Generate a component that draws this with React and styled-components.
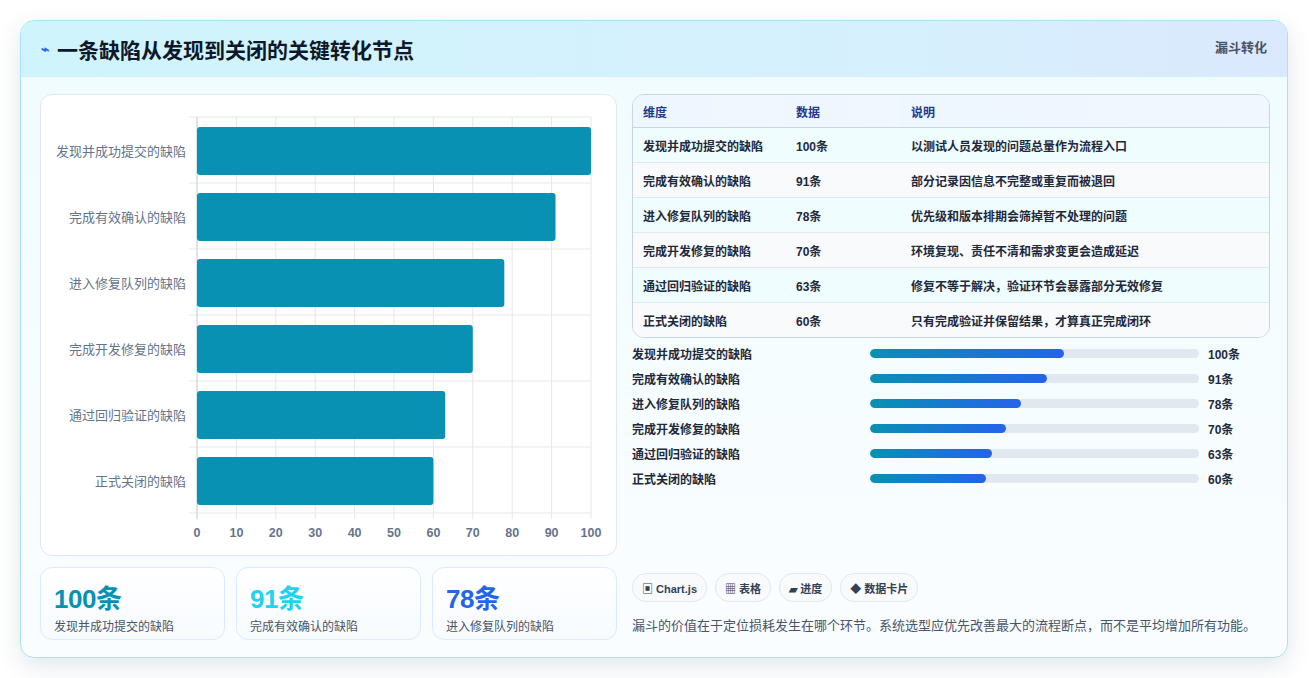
import React from 'react';
import styled, { createGlobalStyle } from 'styled-components';

const Global = createGlobalStyle`
  body { margin: 0; background: #ffffff; font-family: "Liberation Sans", "Noto Sans CJK SC", sans-serif; }
`;

const data = [
  { name: '发现并成功提交的缺陷', v: 100, note: '以测试人员发现的问题总量作为流程入口' },
  { name: '完成有效确认的缺陷', v: 91, note: '部分记录因信息不完整或重复而被退回' },
  { name: '进入修复队列的缺陷', v: 78, note: '优先级和版本排期会筛掉暂不处理的问题' },
  { name: '完成开发修复的缺陷', v: 70, note: '环境复现、责任不清和需求变更会造成延迟' },
  { name: '通过回归验证的缺陷', v: 63, note: '修复不等于解决，验证环节会暴露部分无效修复' },
  { name: '正式关闭的缺陷', v: 60, note: '只有完成验证并保留结果，才算真正完成闭环' },
];

const Page = styled.div`
  padding: 20px;
  height: 678px;
  box-sizing: border-box;
`;
const Card = styled.div`
  width: 1268px;
  height: 638px;
  box-sizing: border-box;
  border: 1px solid #a5e4f0;
  border-radius: 14px;
  background: linear-gradient(180deg, #f0fcff 0%, #fafdff 100%);
  box-shadow: 0 8px 24px rgba(15, 60, 90, 0.12);
  overflow: hidden;
  display: flex;
  flex-direction: column;
`;
const Header = styled.div`
  height: 55px;
  flex: none;
  display: flex;
  align-items: center;
  justify-content: space-between;
  padding: 0 20px;
  background: linear-gradient(90deg, #cff4fc 0%, #d6f0fd 70%, #dbe8fd 100%);
  border-bottom: 1px solid #d5eef6;
`;
const Title = styled.h1`
  margin: 0;
  font-size: 21px;
  font-weight: 700;
  color: #0f172a;
  display: flex;
  align-items: center;
  gap: 8px;
`;
const Bolt = styled.span`
  color: #2563eb;
  font-size: 14px;
`;
const Tag = styled.span`
  align-self: flex-start;
  margin-top: 16px;
  font-size: 13px;
  font-weight: 700;
  color: #475569;
`;
const Body = styled.div`
  flex: 1;
  display: grid;
  grid-template-columns: 577px 638px;
  gap: 15px;
  padding: 17px 19px 18px 19px;
`;
const Col = styled.div`
  display: flex;
  flex-direction: column;
  gap: 11px;
`;
const ChartBox = styled.div`
  height: 462px;
  box-sizing: border-box;
  border: 1px solid #e2e8f0;
  border-radius: 12px;
  background: #fff;
`;
const Stats = styled.div`
  display: grid;
  grid-template-columns: repeat(3, 1fr);
  gap: 11px;
`;
const Stat = styled.div`
  height: 73px;
  box-sizing: border-box;
  border: 1px solid #dbeafe;
  border-radius: 12px;
  background: linear-gradient(180deg, #ffffff, #f7fbff);
  padding: 10px 13px;
`;
const StatNum = styled.div`
  font-size: 26px;
  font-weight: 700;
  color: ${p => p.$c};
  letter-spacing: -0.5px;
`;
const StatLabel = styled.div`
  font-size: 12px;
  color: #475569;
  margin-top: 2px;
`;
const Table = styled.table`
  width: 100%;
  border-collapse: separate;
  border-spacing: 0;
  border: 1px solid #cbd5e1;
  border-radius: 12px;
  overflow: hidden;
  font-size: 12px;
  font-weight: 700;
  color: #1e293b;
`;
const Th = styled.th`
  text-align: left;
  height: 32px;
  padding: 0 10px;
  color: #1e3a8a;
  background: linear-gradient(90deg, #eef6ff, #f1f7ff);
  border-bottom: 1px solid #cbd5e1;
  width: ${p => p.$w || 'auto'};
`;
const Td = styled.td`
  height: 34px;
  padding: 0 10px;
  background: ${p => (p.$odd ? '#f8fafc' : '#f0fdff')};
  border-top: ${p => (p.$first ? 'none' : '1px solid #e2e8f0')};
`;
const Bars = styled.div`
  display: flex;
  flex-direction: column;
  gap: 9px;
  padding-top: 7px;
`;
const BarRow = styled.div`
  display: grid;
  grid-template-columns: 238px 329px 1fr;
  gap: 0;
  align-items: center;
  height: 16px;
  font-size: 12px;
  font-weight: 700;
  color: #1e293b;
`;
const Track = styled.div`
  height: 9px;
  border-radius: 5px;
  background: #e2e8f0;
  overflow: hidden;
`;
const Fill = styled.div`
  height: 100%;
  border-radius: 5px;
  background: linear-gradient(90deg, #0891b2, #2563eb);
`;
const Val = styled.span`
  padding-left: 9px;
`;
const Spacer = styled.div`
  flex: 1;
`;
const Chips = styled.div`
  display: flex;
  gap: 8px;
`;
const Chip = styled.span`
  height: 27px;
  display: flex;
  align-items: center;
  padding: 0 9px;
  border: 1px solid #e2e8f0;
  border-radius: 14px;
  background: #f8fafc;
  font-size: 11px;
  font-weight: 700;
  color: #334155;
`;
const Foot = styled.p`
  margin: 13px 0 6px;
  font-size: 13px;
  color: #475569;
`;

function Chart() {
  const x0 = 156, w = 394, top = 22, rowH = 66;
  const ticks = [0, 10, 20, 30, 40, 50, 60, 70, 80, 90, 100];
  return (
    <svg width="575" height="460">
      {ticks.map(t => (
        <line key={t} x1={x0 + (w * t) / 100} x2={x0 + (w * t) / 100} y1={top} y2={top + rowH * 6 + 6} stroke="#e5e7eb" />
      ))}
      {data.map((d, i) => (
        <line key={i} x1={x0 - 8} x2={x0 + w} y1={top + rowH * i} y2={top + rowH * i} stroke="#e5e7eb" />
      ))}
      <line x1={x0 - 8} x2={x0 + w} y1={top + rowH * 6} y2={top + rowH * 6} stroke="#e5e7eb" />
      <line x1={x0} x2={x0} y1={top} y2={top + rowH * 6 + 6} stroke="#cbd5e1" />
      {data.map((d, i) => (
        <g key={d.name}>
          <rect x={x0} y={top + rowH * i + 10} width={(w * d.v) / 100} height={48} rx="3" fill="#0891b2" />
          <text x={x0 - 11} y={top + rowH * i + 39} textAnchor="end" fontSize="13" fill="#64748b" fontFamily="Liberation Sans, Noto Sans CJK SC, sans-serif">{d.name}</text>
        </g>
      ))}
      {ticks.map(t => (
        <text key={t} x={x0 + (w * t) / 100} y={top + rowH * 6 + 24} textAnchor="middle" fontSize="12.5" fontWeight="700" fill="#64748b" fontFamily="Liberation Sans, sans-serif">{t}</text>
      ))}
    </svg>
  );
}

export default function App() {
  return (
    <Page>
      <Global />
      <Card>
        <Header>
          <Title><Bolt>⌁</Bolt>一条缺陷从发现到关闭的关键转化节点</Title>
          <Tag>漏斗转化</Tag>
        </Header>
        <Body>
          <Col>
            <ChartBox><Chart /></ChartBox>
            <Stats>
              <Stat><StatNum $c="#0891b2">100条</StatNum><StatLabel>发现并成功提交的缺陷</StatLabel></Stat>
              <Stat><StatNum $c="#22d3ee">91条</StatNum><StatLabel>完成有效确认的缺陷</StatLabel></Stat>
              <Stat><StatNum $c="#2563eb">78条</StatNum><StatLabel>进入修复队列的缺陷</StatLabel></Stat>
            </Stats>
          </Col>
          <Col style={{ gap: 0 }}>
            <Table>
              <thead>
                <tr><Th $w="133px">维度</Th><Th $w="95px">数据</Th><Th>说明</Th></tr>
              </thead>
              <tbody>
                {data.map((d, i) => (
                  <tr key={d.name}>
                    <Td $odd={i % 2} $first={i === 0}>{d.name}</Td>
                    <Td $odd={i % 2} $first={i === 0}>{d.v}条</Td>
                    <Td $odd={i % 2} $first={i === 0}>{d.note}</Td>
                  </tr>
                ))}
              </tbody>
            </Table>
            <Bars>
              {data.map(d => (
                <BarRow key={d.name}>
                  <span>{d.name}</span>
                  <Track><Fill style={{ width: `${d.v * 0.59}%` }} /></Track>
                  <Val>{d.v}条</Val>
                </BarRow>
              ))}
            </Bars>
            <Spacer />
            <Chips>
              <Chip>▣ Chart.js</Chip>
              <Chip>▦ 表格</Chip>
              <Chip>▰ 进度</Chip>
              <Chip>◆ 数据卡片</Chip>
            </Chips>
            <Foot>漏斗的价值在于定位损耗发生在哪个环节。系统选型应优先改善最大的流程断点，而不是平均增加所有功能。</Foot>
          </Col>
        </Body>
      </Card>
    </Page>
  );
}
